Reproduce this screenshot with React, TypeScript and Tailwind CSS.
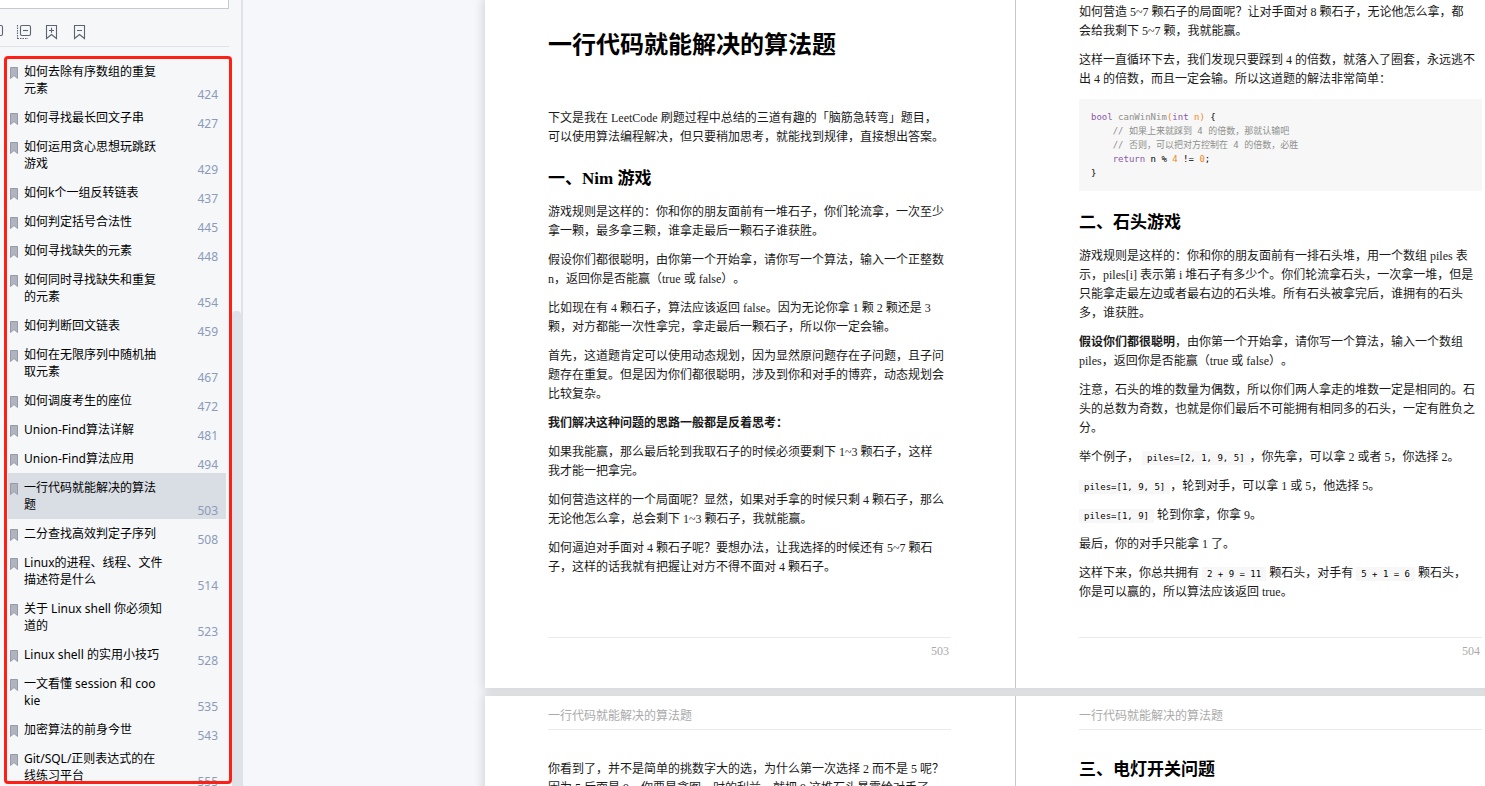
import { Fragment, type ReactNode } from 'react'

type Bookmark = { lines: string[]; page: number; active?: boolean }

const BOOKMARKS: Bookmark[] = [
  { lines: ['如何去除有序数组的重复', '元素'], page: 424 },
  { lines: ['如何寻找最长回文子串'], page: 427 },
  { lines: ['如何运用贪心思想玩跳跃', '游戏'], page: 429 },
  { lines: ['如何k个一组反转链表'], page: 437 },
  { lines: ['如何判定括号合法性'], page: 445 },
  { lines: ['如何寻找缺失的元素'], page: 448 },
  { lines: ['如何同时寻找缺失和重复', '的元素'], page: 454 },
  { lines: ['如何判断回文链表'], page: 459 },
  { lines: ['如何在无限序列中随机抽', '取元素'], page: 467 },
  { lines: ['如何调度考生的座位'], page: 472 },
  { lines: ['Union-Find算法详解'], page: 481 },
  { lines: ['Union-Find算法应用'], page: 494 },
  { lines: ['一行代码就能解决的算法', '题'], page: 503, active: true },
  { lines: ['二分查找高效判定子序列'], page: 508 },
  { lines: ['Linux的进程、线程、文件', '描述符是什么'], page: 514 },
  { lines: ['关于 Linux shell 你必须知', '道的'], page: 523 },
  { lines: ['Linux shell 的实用小技巧'], page: 528 },
  { lines: ['一文看懂 session 和 coo', 'kie'], page: 535 },
  { lines: ['加密算法的前身今世'], page: 543 },
  { lines: ['Git/SQL/正则表达式的在', '线练习平台'], page: 555 },
]

function BookmarkIcon() {
  return (
    <svg className="mt-1 h-3 w-2 flex-none" viewBox="0 0 8 12">
      <path d="M.5.5h7v11L4 8.500.5 11.500z" fill="#b0b4be" stroke="#979ba7" />
    </svg>
  )
}

function ToolIcon({ children }: { children: ReactNode }) {
  return (
    <svg className="h-4 w-4" viewBox="0 0 16 16" fill="none" stroke="#5d6370" strokeWidth="1.1">
      {children}
    </svg>
  )
}

function Sidebar() {
  return (
    <aside className="relative w-[243px] flex-none overflow-hidden border-r-2 border-[#dfe0e9] bg-[#f5f7f9] font-['Noto_Sans','Noto_Sans_CJK_SC',sans-serif] text-xs leading-[17px]">
      <div className="mr-3 border-b border-[#e0e2e7]">
        {/* search box, scrolled mostly out of view */}
        <input
          aria-label="搜索书签"
          className="block h-[9px] w-full border-r border-b border-[#c6c9ce] bg-white outline-none"
        />
        <div className="flex h-[37px] items-center gap-3 pt-2">
          <button aria-label="全部展开" className="-ml-3">
            <ToolIcon>
              <rect x="4.500" y="1.500" width="10" height="10" rx="1.500" />
            </ToolIcon>
          </button>
          <button aria-label="全部收起">
            <ToolIcon>
              <rect x="4.500" y="1.500" width="10" height="10" rx="1.500" />
              <path d="M7 6.500h5" />
              <path d="M1.500 1v14M1.500 14.500H12" strokeDasharray="1.500 1" />
            </ToolIcon>
          </button>
          <button aria-label="添加书签">
            <ToolIcon>
              <path d="M2.500 1.500h10v13l-5-4-5 4zM7.500 3.800v5M5 6.500h5" />
            </ToolIcon>
          </button>
          <button aria-label="删除书签">
            <ToolIcon>
              <path d="M2.500 1.500h10v13l-5-4-5 4zM5 6.500h5" />
            </ToolIcon>
          </button>
        </div>
      </div>

      <ul className="mt-2.5 mr-[15px] ml-2">
        {BOOKMARKS.map((item) => (
          <li key={item.page}>
            <a
              href={`#page-${item.page}`}
              className={`flex items-start gap-1.5 pr-2 pl-0.5 ${item.active ? 'bg-[#d9dde4]' : ''}`}
            >
              <span className="flex gap-1.5 py-1.5 whitespace-nowrap text-black">
                <BookmarkIcon />
                <span>
                  {item.lines.map((line) => (
                    <span key={line} className="block">
                      {line}
                    </span>
                  ))}
                </span>
              </span>
              <span className="ml-auto self-end text-[#8c9bb8]">{item.page}</span>
            </a>
          </li>
        ))}
      </ul>

      {/* scrollbar thumb */}
      <div className="absolute top-[311px] right-0 bottom-0 w-[9px] rounded-t bg-[#dfe3e7]" />
      {/* highlight frame round the bookmark list */}
      <div className="pointer-events-none absolute top-14 right-[9px] bottom-0.5 left-1 rounded border-3 border-[#ff2015]" />
    </aside>
  )
}

// One paragraph, broken the way the PDF breaks it
function P({ lines, bold }: { lines: ReactNode[]; bold?: boolean }) {
  return (
    <p className={`mb-2.5 whitespace-nowrap ${bold ? 'font-bold' : ''}`}>
      {lines.map((line, i) => (
        <Fragment key={i}>
          {i > 0 && <br />}
          {line}
        </Fragment>
      ))}
    </p>
  )
}

function H2({ children }: { children: ReactNode }) {
  return <h2 className="mt-5 mb-3 text-[17px] leading-6 font-bold text-black">{children}</h2>
}

function Code({ children }: { children: ReactNode }) {
  return (
    <code className="bg-[#f7f7f7] px-[5px] py-0.5 font-['DejaVu_Sans_Mono',monospace] text-[9px] leading-none whitespace-pre text-black">
      {children}
    </code>
  )
}

function Page({ id, header, number, children }: { id?: string; header?: string; number: number; children: ReactNode }) {
  return (
    <section
      id={id}
      className="flex w-[531px] flex-none flex-col border-r border-[#c8c8c8] bg-white pr-16 pl-[63px]"
    >
      {header && <header className="border-b border-[#ebebeb] pt-[11px] pb-[3px] text-[#aaa]">{header}</header>}
      {children}
      <div className="mt-auto pt-[25px] pb-[27px]">
        <footer className="border-t border-[#ebebeb] pt-1 pr-0.5 text-right text-[#aaa]">{number}</footer>
      </div>
    </section>
  )
}

// Two facing pages
function Spread({ children }: { children: ReactNode }) {
  return <div className="flex w-max shadow-[0_0_10px_2px_rgba(0,0,0,0.14)]">{children}</div>
}

function CodeBlock() {
  return (
    <pre className="bg-[#f7f7f7] px-3 py-[11px] font-['DejaVu_Sans_Mono','Noto_Sans_CJK_SC',monospace] text-[9px] leading-[14px] text-black">
      <div>
        <span className="text-[#8959a8]">bool</span> <span className="text-[#8e908c]">canWinNim</span>
        <span className="text-[#f5871f]">(</span>
        <span className="text-[#8959a8]">int</span>
        <span className="text-[#f5871f]"> n)</span>
        {' {'}
      </div>
      <div className="text-[#8e908c]">{'    // 如果上来就踩到 4 的倍数，那就认输吧'}</div>
      <div className="text-[#8e908c]">{'    // 否则，可以把对方控制在 4 的倍数，必胜'}</div>
      <div>
        <span className="text-[#8959a8]">{'    return'}</span>
        {' n % '}
        <span className="text-[#f5871f]">4</span>
        {' != '}
        <span className="text-[#f5871f]">0</span>;
      </div>
      <div>{'}'}</div>
    </pre>
  )
}

export default function App() {
  return (
    <div lang="zh-CN" className="flex h-screen overflow-hidden bg-[#f5f7fa]">
      <Sidebar />

      <main className="flex-1 overflow-hidden pl-[242px] font-['Liberation_Serif','Noto_Sans_CJK_SC',serif] text-xs leading-[19px] text-[#1a1a1a] [text-spacing-trim:space-all]">
        <Spread>
          <Page id="page-503" number={503}>
            <article className="pt-[29px]">
              <h1 className="mb-12 text-2xl leading-8 font-bold text-black">一行代码就能解决的算法题</h1>
              <P
                lines={[
                  '下文是我在 LeetCode 刷题过程中总结的三道有趣的「脑筋急转弯」题目，',
                  '可以使用算法编程解决，但只要稍加思考，就能找到规律，直接想出答案。',
                ]}
              />
              <H2>一、Nim 游戏</H2>
              <P
                lines={[
                  '游戏规则是这样的：你和你的朋友面前有一堆石子，你们轮流拿，一次至少',
                  '拿一颗，最多拿三颗，谁拿走最后一颗石子谁获胜。',
                ]}
              />
              <P
                lines={[
                  '假设你们都很聪明，由你第一个开始拿，请你写一个算法，输入一个正整数',
                  'n，返回你是否能赢（true 或 false）。',
                ]}
              />
              <P
                lines={[
                  '比如现在有 4 颗石子，算法应该返回 false。因为无论你拿 1 颗 2 颗还是 3',
                  '颗，对方都能一次性拿完，拿走最后一颗石子，所以你一定会输。',
                ]}
              />
              <P
                lines={[
                  '首先，这道题肯定可以使用动态规划，因为显然原问题存在子问题，且子问',
                  '题存在重复。但是因为你们都很聪明，涉及到你和对手的博弈，动态规划会',
                  '比较复杂。',
                ]}
              />
              <P bold lines={['我们解决这种问题的思路一般都是反着思考：']} />
              <P
                lines={[
                  '如果我能赢，那么最后轮到我取石子的时候必须要剩下 1~3 颗石子，这样',
                  '我才能一把拿完。',
                ]}
              />
              <P
                lines={[
                  '如何营造这样的一个局面呢？显然，如果对手拿的时候只剩 4 颗石子，那么',
                  '无论他怎么拿，总会剩下 1~3 颗石子，我就能赢。',
                ]}
              />
              <P
                lines={[
                  '如何逼迫对手面对 4 颗石子呢？要想办法，让我选择的时候还有 5~7 颗石',
                  '子，这样的话我就有把握让对方不得不面对 4 颗石子。',
                ]}
              />
            </article>
          </Page>

          <Page number={504}>
            <article className="pt-[3px]">
              <P
                lines={[
                  '如何营造 5~7 颗石子的局面呢？让对手面对 8 颗石子，无论他怎么拿，都',
                  '会给我剩下 5~7 颗，我就能赢。',
                ]}
              />
              <P
                lines={[
                  '这样一直循环下去，我们发现只要踩到 4 的倍数，就落入了圈套，永远逃不',
                  '出 4 的倍数，而且一定会输。所以这道题的解法非常简单：',
                ]}
              />
              <CodeBlock />
              <H2>二、石头游戏</H2>
              <P
                lines={[
                  '游戏规则是这样的：你和你的朋友面前有一排石头堆，用一个数组 piles 表',
                  '示，piles[i] 表示第 i 堆石子有多少个。你们轮流拿石头，一次拿一堆，但是',
                  '只能拿走最左边或者最右边的石头堆。所有石头被拿完后，谁拥有的石头',
                  '多，谁获胜。',
                ]}
              />
              <P
                lines={[
                  <>
                    <strong>假设你们都很聪明</strong>，由你第一个开始拿，请你写一个算法，输入一个数组
                  </>,
                  'piles，返回你是否能赢（true 或 false）。',
                ]}
              />
              <P
                lines={[
                  '注意，石头的堆的数量为偶数，所以你们两人拿走的堆数一定是相同的。石',
                  '头的总数为奇数，也就是你们最后不可能拥有相同多的石头，一定有胜负之',
                  '分。',
                ]}
              />
              <P
                lines={[
                  <>
                    举个例子， <Code>piles=[2, 1, 9, 5]</Code>，你先拿，可以拿 2 或者 5，你选择 2。
                  </>,
                ]}
              />
              <P
                lines={[
                  <>
                    <Code>piles=[1, 9, 5]</Code>，轮到对手，可以拿 1 或 5，他选择 5。
                  </>,
                ]}
              />
              <P
                lines={[
                  <>
                    <Code>piles=[1, 9]</Code> 轮到你拿，你拿 9。
                  </>,
                ]}
              />
              <P lines={['最后，你的对手只能拿 1 了。']} />
              <P
                lines={[
                  <>
                    这样下来，你总共拥有 <Code>2 + 9 = 11</Code> 颗石头，对手有 <Code>5 + 1 = 6</Code> 颗石头，
                  </>,
                  '你是可以赢的，所以算法应该返回 true。',
                ]}
              />
            </article>
          </Page>
        </Spread>

        <div className="mt-2">
          <Spread>
            <Page number={505} header="一行代码就能解决的算法题">
              <article className="pt-[30px]">
                <P
                  lines={[
                    '你看到了，并不是简单的挑数字大的选，为什么第一次选择 2 而不是 5 呢？',
                    '因为 5 后面是 9，你要是贪图一时的利益，就把 9 这堆石头暴露给对手了。',
                  ]}
                />
              </article>
            </Page>

            <Page number={506} header="一行代码就能解决的算法题">
              <article className="pt-2">
                <H2>三、电灯开关问题</H2>
              </article>
            </Page>
          </Spread>
        </div>
      </main>
    </div>
  )
}
